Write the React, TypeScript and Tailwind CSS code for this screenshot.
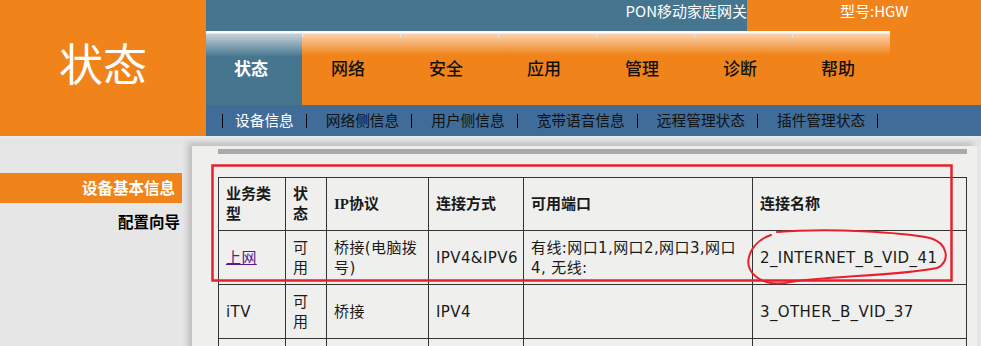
import React from "react";

const tabs = ["网络", "安全", "应用", "管理", "诊断", "帮助"];
const subs = ["网络侧信息", "用户侧信息", "宽带语音信息", "远程管理状态", "插件管理状态"];

function Sep({ ml }: { ml: string }) {
  return <div className={`w-px h-[14px] bg-black flex-none ${ml}`} />;
}

export default function App() {
  const cell = "border border-[#333] px-[7px] align-middle leading-[20px] text-left";
  return (
    <div className="relative w-[981px] h-[346px] overflow-hidden bg-[#E6E6E6] font-['DejaVu_Sans','Noto_Sans_CJK_SC',sans-serif]">
      {/* header */}
      <div className="flex h-[136px]">
        <div className="w-[206px] flex-none bg-[#F0841A] flex items-center justify-center pb-[12px]">
          <span className="text-[44px] leading-none text-white font-['Noto_Sans_CJK_SC',sans-serif]">状态</span>
        </div>
        <div className="flex-1 flex flex-col">
          <div className="flex h-[31px]">
            <div className="w-[541px] bg-[#45758F] text-white text-[15px] text-right pt-[2px] leading-[18px] font-['Noto_Sans_CJK_SC',sans-serif]">
              PON移动家庭网关
            </div>
            <div className="flex-1 bg-[#F0841A] text-white text-[15px] pl-[93px] pt-[2px] leading-[18px] font-['Noto_Sans_CJK_SC',sans-serif]">
              型号:HGW
            </div>
          </div>
          <div className="flex h-[74px] bg-[#F0841A] font-['Noto_Sans_CJK_SC',sans-serif]">
            <div className="w-[96px] flex-none flex items-center justify-center pr-[6px] text-white font-bold text-[17px] bg-[linear-gradient(to_bottom,#ffffff_0px,#ffffff_2px,#C6D1DA_3px,#45758F_26px)]">
              状态
            </div>
            {tabs.map((t) => (
              <div
                key={t}
                className="relative w-[98px] flex-none flex items-center justify-center pr-[6px] text-[#111] font-medium text-[17px] bg-[linear-gradient(to_bottom,#ffffff_0px,#ffffff_2px,#FAD2AE_3px,#F0841A_24px)]"
              >
                <div className="absolute left-0 top-[2px] w-px h-[4px] bg-[#e9e9e9]" />
                {t}
              </div>
            ))}
          </div>
          <div className="h-[31px] bg-[#3F6C98] flex items-center pl-[16px] text-[14.7px] leading-none font-['Noto_Sans_CJK_SC',sans-serif]">
            <Sep ml="" />
            <span className="ml-[12px] text-white">设备信息</span>
            {subs.map((s) => (
              <React.Fragment key={s}>
                <Sep ml="ml-[12px]" />
                <span className="ml-[19px] text-[#111]">{s}</span>
              </React.Fragment>
            ))}
            <Sep ml="ml-[12px]" />
          </div>
        </div>
      </div>

      {/* body */}
      <div className="flex bg-[linear-gradient(to_bottom,#EAEAEA_0px,#E2E2E2_6px,#E6E6E6_10px)]">
        <div className="w-[182px] flex-none pt-[37px] font-['Noto_Sans_CJK_SC',sans-serif]">
          <div className="h-[30px] bg-[#F0841A] text-white font-bold text-[15.5px] flex items-center justify-end pr-[7px]">
            设备基本信息
          </div>
          <div className="h-[38px] flex items-center justify-end pr-[2px] font-bold text-[15.5px] text-black">
            配置向导
          </div>
        </div>
        <div className="flex-1 pt-[10px]">
          <div className="ml-[10px] mr-[4px] h-[220px] bg-[#EFF0EE] shadow-[-4px_-3px_6px_rgba(0,0,0,0.18)] pt-[3px]">
            <div className="ml-[26px] w-[749px] h-[5px] bg-[#A9A9A9]" />
            <table className="ml-[26px] mt-[23px] w-[748px] table-fixed border-collapse text-[15px] text-[#1a1a1a] tracking-[0.4px]">
              <colgroup>
                <col className="w-[67px]" />
                <col className="w-[41px]" />
                <col className="w-[102px]" />
                <col className="w-[95px]" />
                <col className="w-[229px]" />
                <col className="w-[214px]" />
              </colgroup>
              <tbody>
                <tr className="h-[53px] font-bold font-['Liberation_Serif','Noto_Sans_CJK_SC',serif] tracking-normal">
                  <td className={cell}>业务类<br />型</td>
                  <td className={cell}>状<br />态</td>
                  <td className={cell}>IP协议</td>
                  <td className={cell}>连接方式</td>
                  <td className={cell}>可用端口</td>
                  <td className={cell}>连接名称</td>
                </tr>
                <tr className="h-[54px]">
                  <td className={cell}>
                    <a className="text-[#551A8B] underline">上网</a>
                  </td>
                  <td className={cell}>可<br />用</td>
                  <td className={cell}>桥接(电脑拨<br />号)</td>
                  <td className={cell}>IPV4&amp;IPV6</td>
                  <td className={cell}>有线:网口1,网口2,网口3,网口<br />4, 无线:</td>
                  <td className={cell}>2_INTERNET_B_VID_41</td>
                </tr>
                <tr className="h-[54px]">
                  <td className={cell}>iTV</td>
                  <td className={cell}>可<br />用</td>
                  <td className={cell}>桥接</td>
                  <td className={cell}>IPV4</td>
                  <td className={cell}></td>
                  <td className={cell}>3_OTHER_B_VID_37</td>
                </tr>
                <tr className="h-[54px]">
                  <td className={cell}>&nbsp;</td>
                  <td className={cell}></td>
                  <td className={cell}></td>
                  <td className={cell}></td>
                  <td className={cell}></td>
                  <td className={cell}></td>
                </tr>
              </tbody>
            </table>
          </div>
        </div>
      </div>

      {/* red annotations */}
      <svg className="absolute left-0 top-0 pointer-events-none" width="981" height="346" viewBox="0 0 981 346">
        <rect x="212.5" y="165.5" width="739" height="115" fill="none" stroke="#E8202B" strokeWidth="2.5" />
        <path
          d="M 777 232 C 830 228, 900 232, 930 238 C 948 243, 951 262, 937 268 C 900 276, 820 276, 785 283 C 760 286, 745 272, 749 257 C 752 245, 762 238, 771 235"
          fill="none"
          stroke="#E8202B"
          strokeWidth="2"
          strokeLinecap="round"
        />
      </svg>
    </div>
  );
}
